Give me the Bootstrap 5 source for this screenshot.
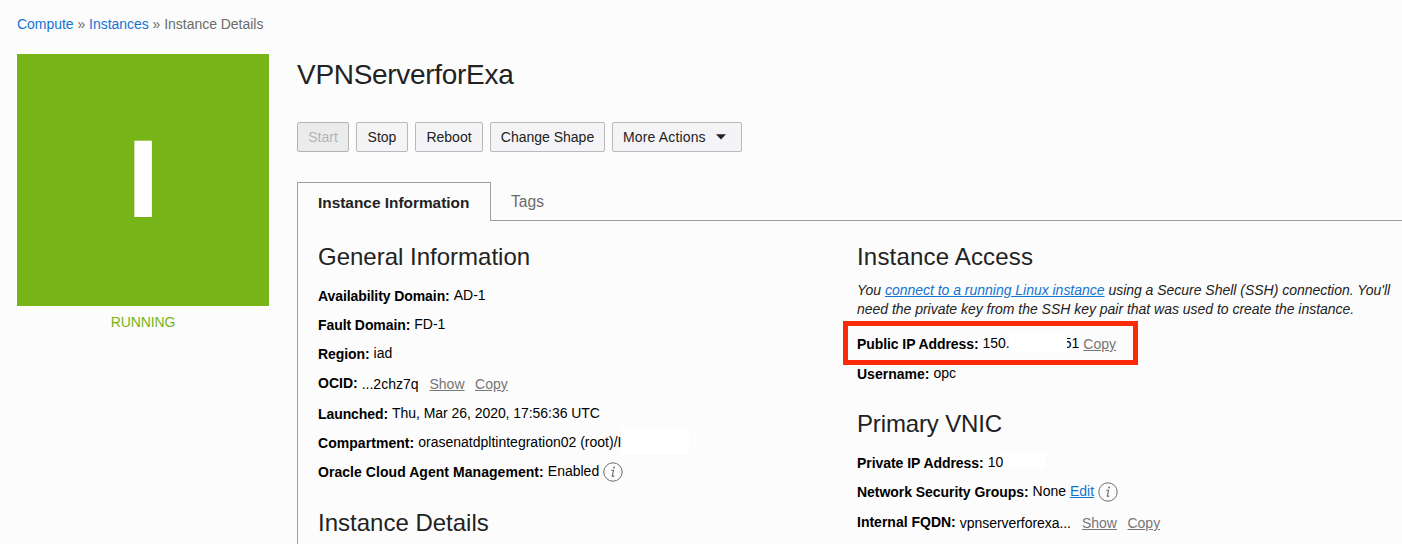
<!DOCTYPE html>
<html lang="en">
<head>
<meta charset="utf-8">
<meta name="viewport" content="width=device-width, initial-scale=1">
<title>Instance Details</title>
<link href="https://cdn.jsdelivr.net/npm/bootstrap@5.3.0/dist/css/bootstrap.min.css" rel="stylesheet">
<script src="https://cdn.jsdelivr.net/npm/bootstrap@5.3.0/dist/js/bootstrap.bundle.min.js" defer></script>
<style>
body{background:#fcfcfc;color:#000;font:14px/20px "Liberation Sans",Arial,sans-serif;overflow:hidden;height:544px}
a{color:#1474d2}
a.quiet{color:#767676}
.crumbs{padding:14px 17px 0;height:54px;color:#6b6b6b;white-space:pre;letter-spacing:-.03px}
.tile{width:252px;height:252px;padding-bottom:1px;background:#76b417;color:#fff;font-size:107px;line-height:1;font-weight:700;-webkit-text-stroke:2px #fff}
.state{width:252px;color:#76b417;margin-top:6px;letter-spacing:-.1px}
.side{width:297px;padding-left:17px}
.title{font-size:28px;line-height:34px;font-weight:400;color:#222;margin:4px 0 0;letter-spacing:-.3px}
.actions{gap:7px;margin-top:30px}
.actions .btn{--bs-btn-color:#222;--bs-btn-bg:#f4f4f6;--bs-btn-border-color:#b9b9bb;--bs-btn-border-radius:2px;--bs-btn-disabled-color:#b4b4b4;--bs-btn-disabled-bg:#ebebec;--bs-btn-disabled-border-color:#b4b4b4;--bs-btn-disabled-opacity:1;font-size:14px;line-height:20px;height:30px;padding:4px 0;white-space:nowrap}
.b52{width:52px}.b68{width:68px}.b115{width:115px}
.actions .b130{width:130px;padding-left:10px;letter-spacing:.15px}
.caret{width:10px;height:6px;margin-left:10px}
.tabbar{margin-top:30px;height:39px;border:0}
.tab-on{width:194px;border:1px solid #a0a0a0;border-bottom:0;color:#222;font-weight:700;font-size:15.4px;line-height:20px;padding:10px 0 0 20px;white-space:nowrap}
.tab-off{border-bottom:1px solid #a0a0a0;color:#6b6b6b;font-size:15.6px;line-height:20px;padding:10px 0 0 20px}
.panel{border-left:1px solid #a0a0a0;height:323px;padding-left:20px}
.panel section{padding-top:21px}
.colA{width:539px}
.colB{width:545px}
h2{font-size:24px;line-height:30px;font-weight:400;color:#222;margin:0;white-space:nowrap}
.h-access{letter-spacing:.18px}
.h-details{margin-top:18px}
.h-vnic{margin-top:17px;letter-spacing:-.15px}
.facts{margin:13px 0 0}
.note + .facts{margin-top:14px}
.fact{height:29px;display:flex;align-items:flex-start;white-space:nowrap;position:relative}
.fact.tall{height:30px}
.fact dt{font-weight:700;margin-right:4px;padding-top:1px}
.fact dd{margin:0;display:flex}
.tight{letter-spacing:-.08px}
.snug{letter-spacing:-.05px}
.loose{letter-spacing:.05px}
.lower{padding-top:1px}
.lowest{padding-top:2px}
.flat dt{padding-top:0}
.far{margin-left:11px}
.far + .far{margin-left:10.5px}
.patch{background:#fff;flex:none}
.p1{width:68px;height:27px;margin-top:-5px;margin-bottom:-8px}
.p2{width:58px;height:18px;margin-left:-1px;margin-right:-3px;z-index:1}
.p3{width:42px;height:16px;margin-top:1px}
.info{width:20px;height:20px;margin:1px 0 0 4px;flex:none}
.note{font-style:italic;line-height:19px;color:#222;white-space:nowrap;margin:9px 0 0;letter-spacing:-.02px}
.callout-frame{position:absolute;left:-14px;top:-12px;width:295px;height:44px;border:5px solid #fb2a09}
</style>
</head>
<body>
<nav class="crumbs"><a href="#" class="text-decoration-none">Compute</a> » <a href="#" class="text-decoration-none">Instances</a> » Instance Details</nav>
<div class="d-flex">
  <aside class="side flex-shrink-0">
    <div class="tile d-flex align-items-center justify-content-center">I</div>
    <div class="state text-center">RUNNING</div>
  </aside>
  <main class="flex-grow-1">
    <h1 class="title">VPNServerforExa</h1>
    <div class="actions d-flex">
      <button class="btn b52" disabled>Start</button>
      <button class="btn b52">Stop</button>
      <button class="btn b68">Reboot</button>
      <button class="btn b115">Change Shape</button>
      <button class="btn b130 d-flex align-items-center">More Actions<svg class="caret" viewBox="0 0 10 6"><path d="M0 0.3H10L5 5.6Z" fill="#222"/></svg></button>
    </div>
    <div class="tabbar d-flex">
      <div class="tab-on flex-shrink-0">Instance Information</div>
      <div class="tab-off flex-grow-1">Tags</div>
    </div>
    <div class="panel d-flex">
      <section class="colA flex-shrink-0">
        <h2>General Information</h2>
        <dl class="facts">
          <div class="fact"><dt class="tight">Availability Domain:</dt><dd>AD-1</dd></div>
          <div class="fact"><dt class="tight">Fault Domain:</dt><dd>FD-1</dd></div>
          <div class="fact tall"><dt class="tight">Region:</dt><dd>iad</dd></div>
          <div class="fact tall flat"><dt>OCID:</dt><dd class="lower">...2chz7q<a href="#" class="quiet far">Show</a><a href="#" class="quiet far">Copy</a></dd></div>
          <div class="fact"><dt class="tight">Launched:</dt><dd class="snug">Thu, Mar 26, 2020, 17:56:36 UTC</dd></div>
          <div class="fact"><dt class="loose">Compartment:</dt><dd>orasenatdpltintegration02 (root)/I<span class="patch p1"></span></dd></div>
          <div class="fact"><dt class="loose">Oracle Cloud Agent Management:</dt><dd>Enabled<svg class="info" viewBox="0 0 20 20"><circle cx="10" cy="10" r="9.2" fill="none" stroke="#6b6b6b"/><path d="M8.2 8.3H10.6L9.2 14.2Q9.6 14.8 11.2 13.7" fill="none" stroke="#6b6b6b" stroke-width="1.1"/><circle cx="11.1" cy="5.5" r=".9" fill="#6b6b6b"/></svg></dd></div>
        </dl>
        <h2 class="h-details">Instance Details</h2>
      </section>
      <section class="colB flex-shrink-0">
        <h2 class="h-access">Instance Access</h2>
        <p class="note">You <a href="#">connect to a running Linux instance</a> using a Secure Shell (SSH) connection. You'll<br>need the private key from the SSH key pair that was used to create the instance.</p>
        <dl class="facts">
          <div class="fact tall"><dt class="tight">Public IP Address:</dt><dd>150.<span class="patch p2"></span>51<a href="#" class="quiet ms-1 lower">Copy</a></dd><span class="callout-frame"></span></div>
          <div class="fact"><dt>Username:</dt><dd>opc</dd></div>
        </dl>
        <h2 class="h-vnic">Primary VNIC</h2>
        <dl class="facts">
          <div class="fact"><dt class="snug">Private IP Address:</dt><dd>10<span class="patch p3"></span></dd></div>
          <div class="fact tall"><dt class="snug">Network Security Groups:</dt><dd>None<a href="#" class="ms-1">Edit</a><svg class="info" viewBox="0 0 20 20"><circle cx="10" cy="10" r="9.2" fill="none" stroke="#6b6b6b"/><path d="M8.2 8.3H10.6L9.2 14.2Q9.6 14.8 11.2 13.7" fill="none" stroke="#6b6b6b" stroke-width="1.1"/><circle cx="11.1" cy="5.5" r=".9" fill="#6b6b6b"/></svg></dd></div>
          <div class="fact"><dt>Internal FQDN:</dt><dd class="lowest"><span class="snug">vpnserverforexa...</span><a href="#" class="quiet far">Show</a><a href="#" class="quiet far">Copy</a></dd></div>
        </dl>
      </section>
    </div>
  </main>
</div>
</body>
</html>
